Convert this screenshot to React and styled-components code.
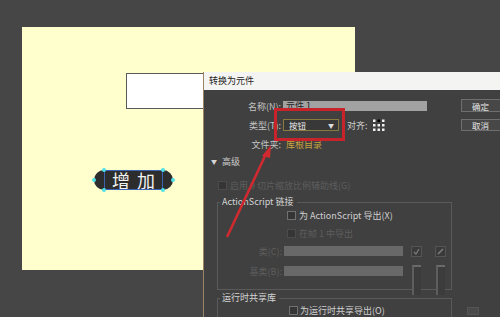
import React from 'react'
import styled, { createGlobalStyle } from 'styled-components'

const Global = createGlobalStyle`
  html, body { margin: 0; padding: 0; background: #464646; }
  body { font-family: "Noto Sans CJK SC", "Noto Sans", sans-serif; }
`

const Workspace = styled.div`
  position: relative;
  width: 500px;
  height: 317px;
  overflow: hidden;
  box-sizing: border-box;
  padding: 27px 0 0 22px;
  background: #464646;
`

const Stage = styled.div`
  position: relative;
  width: 333px;
  height: 243px;
  background: #fffecd;
`

const TextBox = styled.div`
  position: absolute;
  left: 104px;
  top: 46px;
  width: 80px;
  height: 34px;
  background: #fff;
  border: 1px solid #5a5a5a;
`

const Pill = styled.div`
  position: absolute;
  left: 72px;
  top: 143px;
  width: 79px;
  height: 20px;
  border-radius: 10px;
  background: #2d2d2d;
  display: flex;
  align-items: center;
  justify-content: center;
  color: #f2f2f2;
  font-size: 18px;
  letter-spacing: 7px;
  padding-left: 7px;
  box-sizing: border-box;
`

const Frame = styled.div`
  position: absolute;
  left: 10px;
  right: 10px;
  top: 0;
  bottom: 0;
  border: 1px solid #3b64b0;
`

const Handle = styled.span`
  position: absolute;
  width: 4px;
  height: 4px;
  border-radius: 50%;
  background: #4fe0e8;
  left: ${p => p.$x - 2}px;
  top: ${p => p.$y - 2}px;
`

const Dialog = styled.div`
  position: absolute;
  left: 203px;
  top: 72px;
  width: 297px;
  bottom: 0;
  background: #404040;
  border-left: 1px solid #9c8466;
  overflow: hidden;
  font-size: 9px;
  color: #c4c4c4;
`

const TitleBar = styled.div`
  height: 18px;
  line-height: 18px;
  background: #f4f4f2;
  color: #222;
  padding-left: 5px;
`

const TopArea = styled.div`
  display: flex;
`

const FormCol = styled.div`
  width: 258px;
  padding-top: 9px;
  display: flex;
  flex-direction: column;
  gap: 5px;
`

const Row = styled.div`
  display: flex;
  align-items: center;
  height: ${p => p.$h || 14}px;
  margin-top: ${p => p.$mt || 0}px;
  padding-left: ${p => p.$pl || 0}px;
`

const Label = styled.span`
  width: ${p => p.$w || 79}px;
  text-align: right;
  padding-right: 2px;
  box-sizing: border-box;
  white-space: nowrap;
  color: ${p => (p.$dim ? '#5e5e5e' : '#c4c4c4')};
`

const Field = styled.div`
  width: ${p => p.$w}px;
  height: 10px;
  line-height: 10px;
  background: ${p => (p.$dim ? '#686868' : '#a2a2a2')};
  color: #1e1e1e;
  padding-left: 3px;
  box-sizing: border-box;
`

const Select = styled.div`
  width: 56px;
  height: 12px;
  border: 1px solid #8a7a3e;
  background: #383838;
  color: #eee;
  box-sizing: border-box;
  display: flex;
  align-items: center;
  justify-content: space-between;
  padding: 0 4px 0 5px;
  font-size: 8.5px;
`

const Caret = styled.span`
  font-size: 6px;
  color: #ddd;
`

const Link = styled.span`
  color: #c9a23e;
  margin-left: 3px;
`

const ButtonCol = styled.div`
  padding-top: 9px;
  display: flex;
  flex-direction: column;
  gap: 7px;
`

const Button = styled.div`
  width: 40px;
  height: ${p => p.$h}px;
  border: 1px solid #6e6e6e;
  border-right: none;
  background: #474747;
  color: #e6e6e6;
  box-sizing: border-box;
  display: flex;
  align-items: center;
  padding-left: 10px;
  font-size: 8.5px;
`

const Toggle = styled.div`
  height: 12px;
  margin-top: 4px;
  padding-left: 7px;
  display: flex;
  align-items: center;
  gap: 5px;
`

const Arrow = styled.span`
  font-size: 6px;
  color: #d6d6d6;
`

const Check = styled.span`
  width: 7px;
  height: 7px;
  border: 1px solid ${p => (p.$dim ? '#4c4c4c' : '#707070')};
  background: #353535;
  margin-right: ${p => p.$gap || 3}px;
  flex: none;
`

const Text = styled.span`
  white-space: nowrap;
  color: ${p => (p.$dim ? '#5e5e5e' : '#cfcfcf')};
`

const Group = styled.fieldset`
  margin: ${p => p.$mt}px 0 0 13px;
  padding: 0;
  width: 235px;
  height: ${p => p.$h}px;
  box-sizing: border-box;
  border: 1px solid #5a5a5a;
  min-inline-size: 0;
`

const Legend = styled.legend`
  padding: 0 3px 0 2px;
  margin-left: 2px;
  height: 12px;
  line-height: 12px;
  color: #d4d4d4;
  white-space: nowrap;
`

const GroupBody = styled.div`
  display: flex;
  flex-direction: column;
  padding-top: ${p => p.$pt || 0}px;
`

const IconBtn = styled.div`
  width: 11px;
  height: 11px;
  margin-left: ${p => p.$ml}px;
  border: 1px solid #555;
  background: #3a3a3a;
  box-sizing: border-box;
  display: flex;
  align-items: center;
  justify-content: center;
`

const Slot = styled.div`
  align-self: flex-start;
  width: 9px;
  height: 30px;
  margin-left: ${p => p.$ml}px;
  background: #3c3c3c;
  border-left: 2px solid #5e5e5e;
  border-top: 2px solid #6a6a6a;
  box-sizing: border-box;
`

const BottomRow = styled.div`
  display: flex;
  align-items: flex-start;
`

const Mini = styled.div`
  width: 10px;
  height: 6px;
  margin: 17px 0 0 15px;
  background: #4a4a4a;
  border: 1px solid #555;
`

const Overlay = styled.svg`
  position: absolute;
  left: 0;
  top: 0;
  pointer-events: none;
`

function RegGrid() {
  const pts = [0, 1, 2]
  return (
    <svg width="12" height="13" viewBox="0 0 12 13" style={{ marginLeft: 5 }}>
      {pts.map(r =>
        pts.map(c => (
          <rect
            key={`${r}-${c}`}
            x={c * 4.5}
            y={r * 4.5 + 0.5}
            width="2.5"
            height="2.5"
            fill={r === 0 && c === 1 ? '#000' : '#f0f0f0'}
          />
        ))
      )}
    </svg>
  )
}

function CheckMark() {
  return (
    <svg width="7" height="7" viewBox="0 0 7 7">
      <path d="M1 4 L3 6 L6 1" fill="none" stroke="#7c7c7c" strokeWidth="1.2" />
    </svg>
  )
}

function Pencil() {
  return (
    <svg width="7" height="7" viewBox="0 0 7 7">
      <path d="M1 6 L6 1" fill="none" stroke="#7c7c7c" strokeWidth="1.6" />
    </svg>
  )
}

export default function App() {
  return (
    <Workspace>
      <Global />
      <Stage>
        <TextBox />
        <Pill>
          <Frame />
          增加
          <Handle $x={0} $y={10} />
          <Handle $x={79} $y={10} />
          <Handle $x={10} $y={0} />
          <Handle $x={69} $y={0} />
          <Handle $x={10} $y={20} />
          <Handle $x={69} $y={20} />
        </Pill>
      </Stage>

      <Dialog>
        <TitleBar>转换为元件</TitleBar>
        <TopArea>
          <FormCol>
            <Row>
              <Label>名称(N):</Label>
              <Field $w={144}>元件 1</Field>
            </Row>
            <Row>
              <Label>类型(T):</Label>
              <Select>
                按钮
                <Caret>▼</Caret>
              </Select>
              <Text style={{ marginLeft: 8 }}>对齐:</Text>
              <RegGrid />
            </Row>
            <Row>
              <Label>文件夹:</Label>
              <Link>库根目录</Link>
            </Row>
          </FormCol>
          <ButtonCol>
            <Button $h={13}>确定</Button>
            <Button $h={12}>取消</Button>
          </ButtonCol>
        </TopArea>

        <Toggle>
          <Arrow>▼</Arrow>
          <Text>高级</Text>
        </Toggle>

        <Row $h={12} $mt={12} $pl={14}>
          <Check $dim />
          <Text $dim>启用 9 切片缩放比例辅助线(G)</Text>
        </Row>

        <Group $mt={5} $h={94}>
          <Legend>ActionScript 链接</Legend>
          <GroupBody $pt={1}>
            <Row $h={12} $pl={69}>
              <Check $gap={3} />
              <Text>为 ActionScript 导出(X)</Text>
            </Row>
            <Row $h={12} $mt={6} $pl={69}>
              <Check $dim $gap={3} />
              <Text $dim>在帧 1 中导出</Text>
            </Row>
            <Row $h={12} $mt={6}>
              <Label $w={66} $dim>类(C):</Label>
              <Field $w={119} $dim />
              <IconBtn $ml={8}><CheckMark /></IconBtn>
              <IconBtn $ml={13}><Pencil /></IconBtn>
            </Row>
            <Row $h={12} $mt={8}>
              <Label $w={66} $dim>基类(B):</Label>
              <Field $w={119} $dim />
              <Slot $ml={9} />
              <Slot $ml={15} />
            </Row>
          </GroupBody>
        </Group>

        <BottomRow>
          <Group $mt={2} $h={60}>
            <Legend>运行时共享库</Legend>
            <GroupBody>
              <Row $h={12} $pl={71}>
                <Check $gap={2} />
                <Text>为运行时共享导出(O)</Text>
              </Row>
            </GroupBody>
          </Group>
          <Mini />
        </BottomRow>
      </Dialog>

      <Overlay width="500" height="317" viewBox="0 0 500 317">
        <rect x="275.5" y="109.5" width="68" height="30" fill="none" stroke="#c8232b" strokeWidth="3" />
        <line x1="227" y1="237" x2="266" y2="154" stroke="#cf2a30" strokeWidth="2.6" />
        <polygon points="271,145 262,156 270,158" fill="#cf2a30" />
      </Overlay>
    </Workspace>
  )
}
